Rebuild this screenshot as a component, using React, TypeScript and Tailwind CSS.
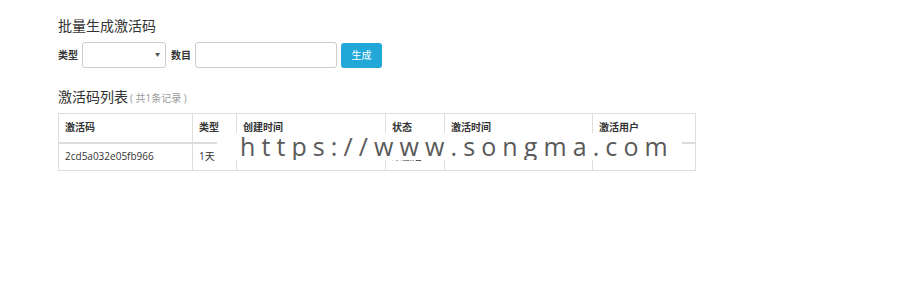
export default function App() {
  const font = { fontFamily: '"Open Sans", "Noto Sans CJK SC", sans-serif' };
  return (
    <div className="relative w-[900px] h-[291px] bg-white text-[#333] pl-[58px] pt-[16px]" style={font}>
      {/* 批量生成 */}
      <h3 className="text-[14px] leading-[20px] font-normal">批量生成激活码</h3>
      <div className="flex items-center mt-[6px] h-[26px] text-[10px]">
        <span className="font-bold mr-[4px]">类型</span>
        <div className="relative w-[84px] h-[26px] border border-[#ccc] rounded-[3px] bg-white">
          <span className="absolute right-[5px] top-[8px] text-[5px] text-[#555]">▼</span>
        </div>
        <span className="font-bold ml-[5px] mr-[4px]">数目</span>
        <div className="w-[142px] h-[26px] border border-[#ccc] rounded-[3px] bg-white" />
        <button className="ml-[4px] w-[41px] h-[25px] rounded-[3px] bg-[#22a8d8] text-white text-[10px] flex items-center justify-center">
          生成
        </button>
      </div>

      {/* 列表 */}
      <h3 className="mt-[19px] text-[14px] leading-[20px] font-normal">
        激活码列表<span className="text-[10px] text-[#999] ml-[2px]">( 共1条记录 )</span>
      </h3>
      <table className="mt-[5px] w-[638px] border-collapse border border-[#ddd] text-[10px] table-fixed">
        <thead>
          <tr className="h-[29px] border-b-2 border-[#ddd]">
            <th className="w-[134px] border border-[#ddd] text-left font-bold px-[6px]">激活码</th>
            <th className="w-[44px] border border-[#ddd] text-left font-bold px-[6px]">类型</th>
            <th className="w-[149px] border border-[#ddd] text-left font-bold px-[6px]">创建时间</th>
            <th className="w-[59px] border border-[#ddd] text-left font-bold px-[6px]">状态</th>
            <th className="w-[148px] border border-[#ddd] text-left font-bold px-[6px]">激活时间</th>
            <th className="border border-[#ddd] text-left font-bold px-[6px]">激活用户</th>
          </tr>
        </thead>
        <tbody>
          <tr className="h-[28px]">
            <td className="border border-[#ddd] px-[6px]">2cd5a032e05fb966</td>
            <td className="border border-[#ddd] px-[6px]">1天</td>
            <td className="border border-[#ddd] px-[6px]">2019-05-21 10:32:56</td>
            <td className="border border-[#ddd] px-[6px]">未激活</td>
            <td className="border border-[#ddd] px-[6px]"></td>
            <td className="border border-[#ddd] px-[6px]"></td>
          </tr>
        </tbody>
      </table>

      {/* watermark */}
      <div className="absolute left-[217px] top-[133px] w-[465px] h-[27px] bg-white flex items-center pl-[23px] overflow-hidden">
        <span className="text-[25px] leading-none text-[#5a5a5a] tracking-[6.1px] whitespace-nowrap" style={{ fontFamily: '"Open Sans", sans-serif' }}>
          https://www.songma.com
        </span>
      </div>
    </div>
  );
}
